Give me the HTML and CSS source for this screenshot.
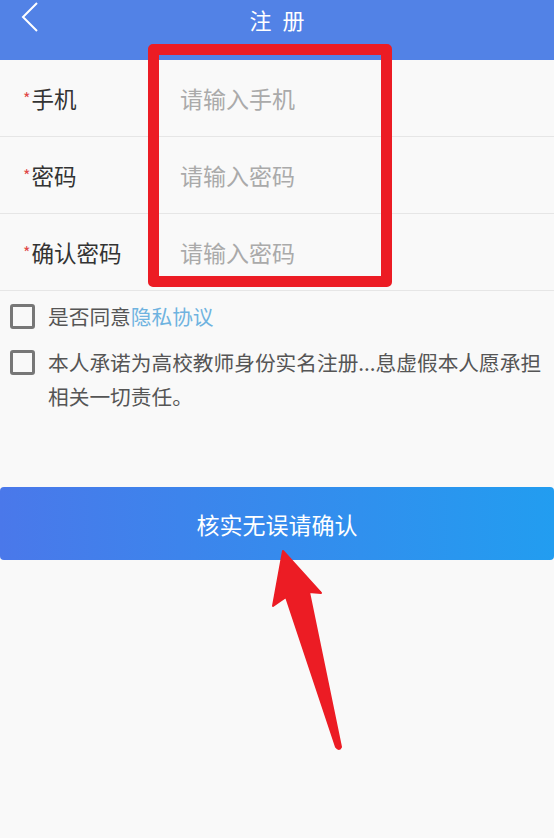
FILE: index.html
```html
<!DOCTYPE html>
<html lang="zh-CN">
<head>
    <meta charset="UTF-8">
    <meta name="viewport" content="width=device-width, initial-scale=1.0">
    <title>注册</title>
    <link rel="stylesheet" href="styles.css">
</head>
<body>

    <div class="header">
        <svg class="back-icon" width="20" height="32" viewBox="0 0 20 32">
            <polyline points="17,2 3,16 17,30" fill="none" stroke="#fff" stroke-width="2"/>
        </svg>
        <h1>注 册</h1>
    </div>

    <div class="form">
        <div class="form-row">
            <label><span class="required">*</span>手机</label>
            <input type="text" placeholder="请输入手机">
        </div>
        <div class="form-row">
            <label><span class="required">*</span>密码</label>
            <input type="password" placeholder="请输入密码">
        </div>
        <div class="form-row">
            <label><span class="required">*</span>确认密码</label>
            <input type="password" placeholder="请输入密码">
        </div>
        <!-- 标注框 -->
        <div class="mark-box"></div>
    </div>

    <div class="agree-list">
        <div class="agree-item">
            <span class="check-box"></span>
            <p>是否同意<a href="#">隐私协议</a></p>
        </div>
        <div class="agree-item">
            <span class="check-box"></span>
            <p>本人承诺为高校教师身份实名注册...息虚假本人愿承担相关一切责任。</p>
        </div>
    </div>

    <div class="button-wrap">
        <button type="button" class="submit-button">核实无误请确认</button>
        <!-- 标注箭头 -->
        <svg class="mark-arrow" width="80" height="210" viewBox="0 0 80 210">
            <path d="M13,2 L3,57 L16,48 L66,198 Q69,202 71,198 L39,43 L51,44 Z" fill="#ec1c24" stroke="#ec1c24" stroke-width="2" stroke-linejoin="round"/>
        </svg>
    </div>

</body>
</html>
```

FILE: styles.css
```css
body {
    margin: 0;
    background-color: #f9f9f9;
    font-family: "Noto Sans CJK SC", "Noto Sans", sans-serif;
    height: 838px;
    overflow: hidden;
}
.header {
    position: relative;
    height: 60px;
    background-color: #5282e6;
    text-align: center;
}
.header h1 {
    margin: 0;
    padding-top: 3px;
    font-size: 22px;
    font-weight: normal;
    line-height: 32px;
    color: #fff;
    letter-spacing: 3px;
    text-indent: 3px;
}
.back-icon {
    position: absolute;
    left: 20px;
    top: 1px;
}
.form {
    position: relative;
}
.form-row {
    display: flex;
    align-items: center;
    height: 76px;
    border-bottom: 1px solid #e6e6e6;
}
.form-row label {
    width: 180px;
    padding-left: 23px;
    box-sizing: border-box;
    font-size: 22.5px;
    color: #333;
}
.required {
    color: #e04848;
    font-size: 16px;
    vertical-align: 3px;
    margin-right: 1px;
}
.form-row input {
    flex: 1;
    border: none;
    background: transparent;
    outline: none;
    font-family: inherit;
    font-size: 23px;
    color: #333;
    padding: 0;
}
.form-row input::placeholder {
    color: #aaa;
}
.mark-box {
    position: absolute;
    left: 148px;
    top: -16px;
    width: 244px;
    height: 243px;
    box-sizing: border-box;
    border: 11px solid #ec1c24;
    border-radius: 5px;
}
.agree-list {
    display: flex;
    flex-direction: column;
    gap: 12px;
    padding: 8px 8px 0 10px;
}
.agree-item {
    display: flex;
    align-items: flex-start;
}
.check-box {
    flex: none;
    width: 19px;
    height: 19px;
    border: 3px solid #777;
    border-radius: 3px;
    margin-top: 5px;
}
.agree-item p {
    margin: 0 0 0 13px;
    font-size: 20.7px;
    line-height: 34px;
    color: #555;
}
.agree-item a {
    color: #6fb3e0;
    text-decoration: none;
}
.button-wrap {
    position: relative;
    margin-top: 74px;
}
.submit-button {
    display: block;
    width: 100%;
    height: 73px;
    border: none;
    border-radius: 4px;
    background: linear-gradient(to right, #4a78ea, #229df0);
    color: #fff;
    font-family: inherit;
    font-size: 23px;
    cursor: pointer;
}
.mark-arrow {
    position: absolute;
    left: 270px;
    top: 62px;
}
```
